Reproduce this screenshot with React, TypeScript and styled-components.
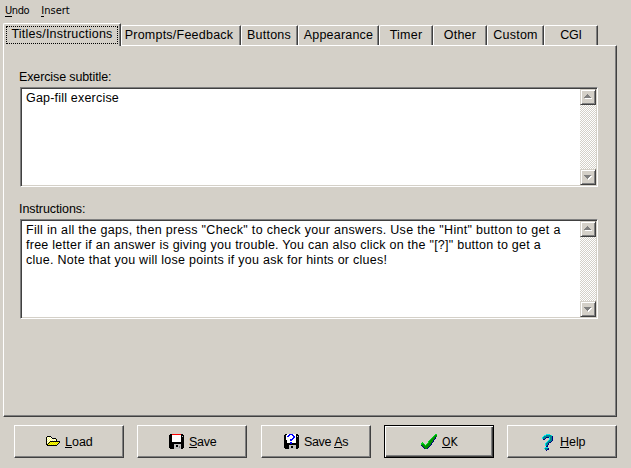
import React from 'react';
import styled, { createGlobalStyle, css } from 'styled-components';

const face = '#d4d0c8';

const GlobalStyle = createGlobalStyle`
  body {
    margin: 0;
    background: ${face};
    color: #000;
    font: 12.5px/15px 'Liberation Sans', Arial, sans-serif;
    overflow: hidden;
  }
`;

const Window = styled.div`
  width: 631px;
  height: 468px;
  box-sizing: border-box;
  display: flex;
  flex-direction: column;
  background: ${face};
`;

const MenuBar = styled.nav`
  display: flex;
  gap: 12px;
  height: 23px;
  padding: 3px 0 0 5px;
  box-sizing: border-box;
  font: 11px/15px 'DejaVu Sans Condensed', 'DejaVu Sans', sans-serif;
`;

const MenuItem = styled.span<{ $track: number }>`
  letter-spacing: ${(p) => p.$track}px;
`;

const Key = styled.span`
  border-bottom: 1px solid #000;
  display: inline-block;
  line-height: 10px;
`;

const TabStrip = styled.div`
  display: flex;
  align-items: flex-end;
  height: 22px;
  padding-left: 3px;
`;

const Tab = styled.div<{ $width: number; $track: number; $nudge?: number; $active?: boolean }>`
  width: ${(p) => p.$width}px;
  height: 20px;
  box-sizing: border-box;
  flex: none;
  display: flex;
  justify-content: center;
  padding-right: ${(p) => p.$nudge ?? 0}px;
  border-top: 1px solid #fff;
  border-left: 1px solid #fff;
  border-right: 1px solid #404040;
  border-radius: 2px 1px 0 0;
  box-shadow: inset -1px 0 #808080;
  line-height: 18px;
  letter-spacing: ${(p) => p.$track}px;
  white-space: nowrap;
  ${(p) =>
    p.$active &&
    css`
      height: 23px;
      margin-bottom: -1px;
      padding: 2px 2px 1px;
      background: ${face};
      z-index: 1;
    `}
`;

const Focus = styled.span`
  flex: 1;
  border: 1px dotted #000;
  text-align: center;
  line-height: 15px;
  box-sizing: border-box;
  height: 18px;
`;

const Panel = styled.main`
  width: 614px;
  height: 372px;
  flex: none;
  box-sizing: border-box;
  margin-left: 3px;
  padding: 24px 0 0 16px;
  border: 1px solid;
  border-color: #fff #404040 #404040 #fff;
  box-shadow: inset -1px -1px #808080;
`;

const Field = styled.section`
  height: 132px;
`;

const Label = styled.div<{ $track: number }>`
  height: 17px;
  margin-left: -1px;
  letter-spacing: ${(p) => p.$track}px;
`;

const Memo = styled.div`
  width: 578px;
  height: 100px;
  box-sizing: border-box;
  display: flex;
  justify-content: space-between;
  background: #fff;
  border: 1px solid;
  border-color: #808080 #fff #fff #808080;
  box-shadow: inset 1px 1px #404040, inset -1px -1px ${face};
  padding: 1px;
`;

const MemoText = styled.div`
  padding: 2px 0 0 4px;
`;

const Line = styled.div<{ $track: number }>`
  height: 15px;
  letter-spacing: ${(p) => p.$track}px;
  white-space: nowrap;
`;

const ScrollBar = styled.div`
  width: 16px;
  flex: none;
  display: flex;
  flex-direction: column;
  justify-content: space-between;
  background: repeating-conic-gradient(#fff 0 25%, ${face} 0 50%) 0 0 / 2px 2px;
`;

const ScrollButton = styled.div`
  height: 16px;
  box-sizing: border-box;
  background: ${face};
  border: 1px solid;
  border-color: ${face} #404040 #404040 ${face};
  box-shadow: inset 1px 1px #fff, inset -1px -1px #808080;
  padding: 4px 0 0 3px;

  svg {
    display: block;
  }
`;

const ButtonRow = styled.footer`
  display: grid;
  grid-template-columns: 123px 124px 123px 123px 110px;
  padding: 8px 0 0 14px;
`;

const PushButton = styled.div<{ $pad: number; $gap: number; $default?: boolean }>`
  width: 110px;
  height: 33px;
  box-sizing: border-box;
  display: flex;
  padding: 8px 0 0 ${(p) => p.$pad}px;
  gap: ${(p) => p.$gap}px;
  border: 1px solid;
  border-color: #fff #404040 #404040 #fff;
  box-shadow: inset -1px -1px #808080;
  ${(p) =>
    p.$default &&
    css`
      border-color: #000;
      box-shadow: inset 1px 1px #fff, inset -1px -1px #404040, inset -2px -2px #808080;
    `}

  svg {
    flex: none;
    display: block;
  }
`;

const Caption = styled.span<{ $track: number; $menuFont?: boolean }>`
  line-height: 16px;
  letter-spacing: ${(p) => p.$track}px;
  white-space: nowrap;
  ${(p) => p.$menuFont && css`font: 12px/16px 'DejaVu Sans Condensed', 'DejaVu Sans', sans-serif;`}
`;

const palette: Record<string, string> = {
  K: '#000000', W: '#ffffff', Y: '#ffff00', y: '#ffff80', O: '#d8d800',
  R: '#ff0000', G: '#c0c0c0', B: '#0000ff', E: '#009000', L: '#00d820',
  N: '#000080', T: '#008890', C: '#00e8f0', D: '#808080',
};

function PixelIcon({ rows }: { rows: string[] }) {
  const width = Math.max(...rows.map((r) => r.length));
  return (
    <svg width={width} height={rows.length} shapeRendering="crispEdges">
      {rows.flatMap((row, y) =>
        [...row].map((c, x) =>
          palette[c] ? <rect key={`${x}-${y}`} x={x} y={y} width="1" height="1" fill={palette[c]} /> : null,
        ),
      )}
    </svg>
  );
}

const upArrow = ['...D....', '..DDD...', '.DDDDD..', 'DDDDDDD.', '.WWWWWWW'];
const downArrow = ['........', 'DDDDDDD.', '.DDDDDWW', '..DDDWW.', '...DWW..', '....W...'];

const folder = [
  '..............', '..............',
  '.KKKK.........',
  'KyWyWK........',
  'KWyWyWKKKK....',
  'KyWyWyWyWyK...',
  'KWyWyWyWyWK...',
  'KyWyKKKKKKKKKK',
  'KWyKYOYOYOYOYK',
  'KyKYOYOYOYOYK.',
  'KKYOYOYOYOYK..',
  '.KKKKKKKKKK...',
];

const disk = [
  '.KKRRRRRRRRRKK.',
  'KKKWWWWWWWWWKKK',
  'KKKWWWWWWWWWKGK',
  'KKKWWWWWWWWWKKK',
  'KKKWWWWWWWWWKKK',
  'KKKWWWWWWWWWKKK',
  'KKKWWWWWWWWWKKK',
  'KKKWWWWWWWWWKKK',
  'KKKKKKKKKKKKKKK',
  'KKKKKKKKKKKKKKK',
  'KKKKKGGGGGGGKKK',
  'KKKKKGGKKGGGKKK',
  'KKKKKGGKKGDGKKK',
  'KKKKKGGGGGDGKKK',
  '.KKKKGGGGGGGKK.',
];

const diskQuestion = [
  '.KKWWBBBBWWWKK.',
  'KKWWBBWWBBWWKKK',
  'KKWBBWWWWBBWKGK',
  'KKWWWWWWWBBWKKK',
  'KKWWWWWWBBWWKKK',
  'KKWWWWBBBWWWKKK',
  'KKKWWWBBWWWWKKK',
  'KKKWWWWWWWWWKKK',
  'KKKWWWBBWWWWKKK',
  'KKKKKKBBKKKKKKK',
  'KKKKKKKKKKKKKKK',
  'KKKKKGGGGGGGKKK',
  'KKKKKGGKKGGGKKK',
  'KKKKKGGKKGGGKKK',
  '.KKKKGGGGGGGKK.',
];

const check = [
  '..............LL',
  '.............LEE',
  '............LEEE',
  '...........LEEN.',
  '..........LEEEN.',
  '.........LEEEN..',
  '........LEEEN...',
  '.......LEEEEN...',
  '.L.....LEEEN....',
  'LLL...LEEEN.....',
  'LEEL.LEEEEN.....',
  'NEEELEEEEN......',
  '.NEEEEEEN.......',
  '..NEEEEN........',
  '...NEEN.........',
];

const help = [
  '....CCCC...',
  '..CCTTTTTC.',
  '.CTTTTTTTTN',
  'CTTTNNNCTTN',
  'CTTN...CTTN',
  '.NN....CTTN',
  '......CTTTN',
  '.....CTTTN.',
  '....CTTNN..',
  '...CTTN....',
  '...CTTN....',
  '...CTN.....',
  '....NN.....',
  '...CCC.....',
  '..CTTTN....',
  '...TTNN....',
  '....N......',
];

const inactiveTabs: [string, number, number, number][] = [
  ['Prompts/Feedback', 120, 0.23, 4],
  ['Buttons', 57, 0.24, 1],
  ['Appearance', 81, 0.2, 0],
  ['Timer', 54, 0.22, 0],
  ['Other', 54, 0.22, 0],
  ['Custom', 57, 0.22, 0],
  ['CGI', 54, -0.2, 0],
];

function MemoField({ label, track, lines }: { label: string; track: number; lines: [string, number][] }) {
  return (
    <Field>
      <Label $track={track}>{label}</Label>
      <Memo>
        <MemoText>
          {lines.map(([text, t]) => (
            <Line key={text} $track={t}>{text}</Line>
          ))}
        </MemoText>
        <ScrollBar>
          <ScrollButton><PixelIcon rows={upArrow} /></ScrollButton>
          <ScrollButton><PixelIcon rows={downArrow} /></ScrollButton>
        </ScrollBar>
      </Memo>
    </Field>
  );
}

export default function App() {
  return (
    <Window>
      <GlobalStyle />
      <MenuBar>
        <MenuItem $track={-0.4}><Key>U</Key>ndo</MenuItem>
        <MenuItem $track={0}><Key>I</Key>nsert</MenuItem>
      </MenuBar>
      <TabStrip>
        <Tab $width={118} $track={0.23} $active><Focus>Titles/Instructions</Focus></Tab>
        {inactiveTabs.map(([text, width, track, nudge]) => (
          <Tab key={text} $width={width} $track={track} $nudge={nudge}>{text}</Tab>
        ))}
      </TabStrip>
      <Panel>
        <MemoField label="Exercise subtitle:" track={-0.12} lines={[['Gap-fill exercise', 0.2]]} />
        <MemoField
          label="Instructions:"
          track={-0.08}
          lines={[
            ['Fill in all the gaps, then press "Check" to check your answers. Use the "Hint" button to get a', 0.31],
            ['free letter if an answer is giving you trouble. You can also click on the "[?]" button to get a', 0.25],
            ['clue. Note that you will lose points if you ask for hints or clues!', 0.27],
          ]}
        />
      </Panel>
      <ButtonRow>
        <PushButton $pad={31} $gap={5}>
          <PixelIcon rows={folder} />
          <Caption $track={0}><Key>L</Key>oad</Caption>
        </PushButton>
        <PushButton $pad={31} $gap={5}>
          <PixelIcon rows={disk} />
          <Caption $track={-0.3}><Key>S</Key>ave</Caption>
        </PushButton>
        <PushButton $pad={22} $gap={5}>
          <PixelIcon rows={diskQuestion} />
          <Caption $track={-0.35}>Save <Key>A</Key>s</Caption>
        </PushButton>
        <PushButton $pad={36} $gap={5} $default>
          <PixelIcon rows={check} />
          <Caption $track={0} $menuFont><Key>O</Key>K</Caption>
        </PushButton>
        <PushButton $pad={34} $gap={7}>
          <PixelIcon rows={help} />
          <Caption $track={-0.05}><Key>H</Key>elp</Caption>
        </PushButton>
      </ButtonRow>
    </Window>
  );
}
